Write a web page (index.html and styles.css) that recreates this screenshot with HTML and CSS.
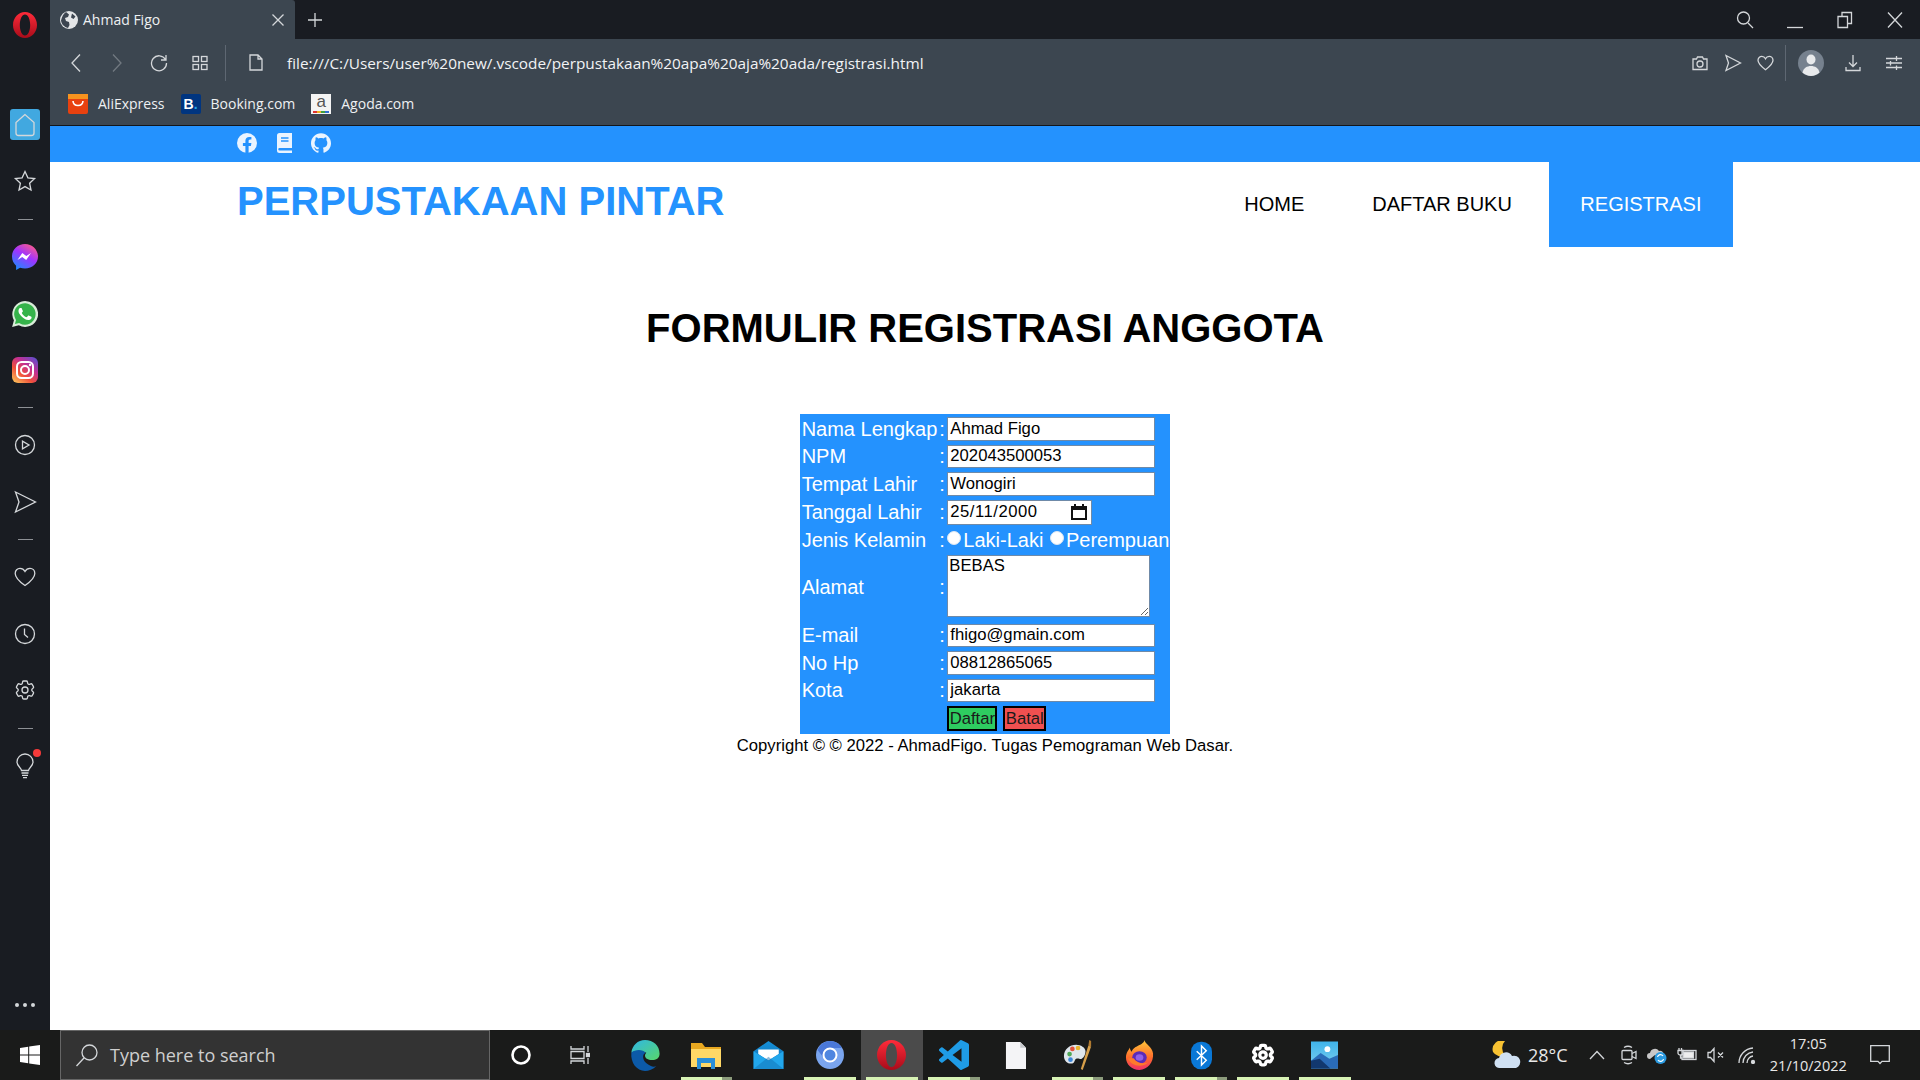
FILE: index.html
```html
<!DOCTYPE html>
<html lang="id">
<head>
    <meta charset="UTF-8">
    <title>Ahmad Figo</title>
    <link rel="stylesheet" href="styles.css">
</head>
<body>
<svg class="defs" width="0" height="0">
    <defs>
        <linearGradient id="g-opera" x1="0" y1="0" x2="0" y2="1"><stop offset="0" stop-color="#ff2b3a"/><stop offset="1" stop-color="#a80c1a"/></linearGradient>
        <linearGradient id="g-msg" x1="0.2" y1="1" x2="0.8" y2="0"><stop offset="0" stop-color="#1a8cff"/><stop offset="0.55" stop-color="#a033ff"/><stop offset="1" stop-color="#ff5c87"/></linearGradient>
        <linearGradient id="g-ig" x1="0.1" y1="1" x2="0.9" y2="0"><stop offset="0" stop-color="#fdc35a"/><stop offset="0.35" stop-color="#f0503c"/><stop offset="0.65" stop-color="#c22f93"/><stop offset="1" stop-color="#5b4fd0"/></linearGradient>
        <linearGradient id="g-edge" x1="0" y1="0" x2="1" y2="1"><stop offset="0" stop-color="#2fb7e6"/><stop offset="1" stop-color="#58d66a"/></linearGradient>
        <linearGradient id="g-mail" x1="0" y1="0" x2="0" y2="1"><stop offset="0" stop-color="#1590d8"/><stop offset="1" stop-color="#0f6cb0"/></linearGradient>
        <linearGradient id="g-fox" x1="0.5" y1="0" x2="0.5" y2="1"><stop offset="0" stop-color="#ffc93a"/><stop offset="0.6" stop-color="#ff6a2b"/><stop offset="1" stop-color="#f0306a"/></linearGradient>
        <linearGradient id="g-photo" x1="0" y1="0" x2="0" y2="1"><stop offset="0" stop-color="#3fb4ea"/><stop offset="1" stop-color="#7fd0f0"/></linearGradient>
        <symbol id="i-cog" viewBox="0 0 24 24"><path d="M9.594 3.94c.09-.542.56-.94 1.11-.94h2.593c.55 0 1.02.398 1.11.94l.213 1.281c.063.374.313.686.645.87.074.04.147.083.22.127.324.196.72.257 1.075.124l1.217-.456a1.125 1.125 0 011.37.49l1.296 2.247a1.125 1.125 0 01-.26 1.431l-1.003.827c-.293.24-.438.613-.431.992a6.759 6.759 0 010 .255c-.007.378.138.75.43.99l1.005.828c.424.35.534.954.26 1.43l-1.298 2.247a1.125 1.125 0 01-1.369.491l-1.217-.456c-.355-.133-.75-.072-1.076.124a6.57 6.57 0 01-.22.128c-.331.183-.581.495-.644.869l-.213 1.28c-.09.543-.56.941-1.11.941h-2.594c-.55 0-1.02-.398-1.11-.94l-.213-1.281c-.062-.374-.312-.686-.644-.87a6.52 6.52 0 01-.22-.127c-.325-.196-.72-.257-1.076-.124l-1.217.456a1.125 1.125 0 01-1.369-.49l-1.297-2.247a1.125 1.125 0 01.26-1.431l1.004-.827c.292-.24.437-.613.43-.992a6.932 6.932 0 010-.255c.007-.378-.138-.75-.43-.99l-1.004-.828a1.125 1.125 0 01-.26-1.43l1.297-2.247a1.125 1.125 0 011.37-.491l1.216.456c.356.133.751.072 1.076-.124.072-.044.146-.087.22-.128.332-.183.582-.495.644-.869l.214-1.281z"/><circle cx="12" cy="12" r="3"/></symbol>
    </defs>
</svg>

<div class="desktop">
    <div class="window">
        <aside class="side">
            <div class="side-logo">
                <svg width="24" height="26" viewBox="0 0 24 26"><path fill="url(#g-opera)" fill-rule="evenodd" d="M12 0C5.4 0 0 5.8 0 13s5.4 13 12 13 12-5.8 12-13S18.6 0 12 0zm0 2.500c3 0 5.200 4.700 5.200 10.500S15 23.500 12 23.500 6.800 18.800 6.800 13 9 2.500 12 2.500z"/></svg>
            </div>
            <div class="side-item">
                <span class="home-box">
                    <svg class="line" width="22" height="24" viewBox="0 0 22 24"><path d="M11 1.500L2 9.500v10.500a2.500 2.500 0 0 0 2.500 2.500h13a2.500 2.500 0 0 0 2.500-2.500V9.500z"/></svg>
                </span>
            </div>
            <div class="side-item">
                <svg class="line" width="24" height="24" viewBox="0 0 24 24"><path d="M12 2.500l2.900 6.300 6.700.8-5 4.600 1.400 6.800-6-3.400-6 3.400 1.400-6.800-5-4.600 6.700-.8z"/></svg>
            </div>
            <div class="side-dash"></div>
            <div class="side-item">
                <svg width="26" height="26" viewBox="0 0 26 26"><path fill="url(#g-msg)" d="M13 0C5.700 0 0 5.300 0 12.500c0 3.800 1.600 7 4.100 9.200V26l4-2.200c1.500.5 3.100.7 4.900.7 7.300 0 13-5.300 13-12S20.300 0 13 0z"/><path fill="#fff" d="M5.500 16l4.800-7 4 3 4.700-3-4.800 7-4-3z"/></svg>
            </div>
            <div class="side-item side-wa">
                <svg width="26" height="26" viewBox="0 0 24 24"><path fill="#d9ecd9" d="M.1 24l1.700-6.200A11.900 11.900 0 1 1 12 23.900a11.900 11.900 0 0 1-5.700-1.500z"/><path fill="#35b34a" d="M2.700 21.300l1-3.800-.3-.4A9.900 9.900 0 1 1 12 21.900a9.900 9.900 0 0 1-5-1.400l-.4-.2z"/><path fill="#fff" d="M17.470 14.380c-.3-.15-1.760-.87-2.030-.97-.27-.1-.47-.15-.67.15-.2.3-.77.97-.94 1.170-.17.2-.35.22-.65.07-.3-.15-1.260-.46-2.400-1.480-.89-.79-1.490-1.770-1.660-2.070-.17-.3-.02-.46.13-.61.13-.13.3-.35.45-.52.15-.17.2-.3.3-.5.1-.2.05-.37-.02-.52-.07-.15-.67-1.610-.92-2.210-.24-.58-.49-.5-.67-.51h-.57c-.2 0-.52.07-.79.37-.27.3-1.040 1.020-1.040 2.480s1.070 2.880 1.220 3.070c.15.2 2.100 3.200 5.080 4.490.71.3 1.260.49 1.690.63.71.23 1.360.2 1.870.12.57-.09 1.760-.72 2.010-1.410.25-.7.25-1.290.17-1.410-.07-.13-.27-.2-.57-.35z"/></svg>
            </div>
            <div class="side-item">
                <svg width="26" height="26" viewBox="0 0 26 26"><rect width="26" height="26" rx="6" fill="url(#g-ig)"/><rect x="5" y="5" width="16" height="16" rx="4.500" fill="none" stroke="#fff" stroke-width="2"/><circle cx="13" cy="13" r="4" fill="none" stroke="#fff" stroke-width="2"/><circle cx="18" cy="8" r="1.200" fill="#fff"/></svg>
            </div>
            <div class="side-dash"></div>
            <div class="side-item">
                <svg class="line" width="22" height="22" viewBox="0 0 22 22"><circle cx="11" cy="11" r="9.500"/><path d="M8.500 7.200v7.600l6.500-3.800z"/></svg>
            </div>
            <div class="side-item">
                <svg class="line" width="24" height="24" viewBox="0 0 24 24"><path d="M2.500 2l20 10-20 10 3.500-10z"/></svg>
            </div>
            <div class="side-dash"></div>
            <div class="side-item">
                <svg class="line" width="22" height="20" viewBox="0 0 22 20"><path d="M11 18.500C4 13.500 1.200 10 1.200 6.400 1.200 3.400 3.400 1.300 6 1.300c2 0 3.900 1.100 5 3.100 1.100-2 3-3.100 5-3.100 2.600 0 4.800 2.100 4.800 5.100 0 3.600-2.800 7.100-9.800 12.100z"/></svg>
            </div>
            <div class="side-item">
                <svg class="line" width="22" height="22" viewBox="0 0 22 22"><circle cx="11" cy="11" r="9.500"/><path d="M10.500 5.500v6l3.500 3"/></svg>
            </div>
            <div class="side-item">
                <svg class="line" width="24" height="24" viewBox="0 0 24 24"><use href="#i-cog"/></svg>
            </div>
            <div class="side-dash"></div>
            <div class="side-item">
                <span class="bulb">
                    <svg class="line" width="20" height="26" viewBox="0 0 20 26"><path d="M6.500 17.500c0-2.500-4.500-4-4.500-8.500a8 8 0 0 1 16 0c0 4.500-4.500 6-4.500 8.500z"/><path d="M6.500 20h7M7 22.300h6M8 24.600h4"/></svg>
                    <i class="bulb-dot"></i>
                </span>
            </div>
            <div class="side-more"><i></i><i></i><i></i></div>
        </aside>

        <div class="browser">
            <div class="tabstrip">
                <div class="tab">
                    <svg width="18" height="18" viewBox="0 0 18 18"><circle cx="9" cy="9" r="9" fill="#e4e6e8"/><path fill="#3c4550" d="M6 1l3 2.500-1 2.500-3 1 1 3 3 1 .5 3-1.500 3C4 16 1.500 13 1 9.500 2 5.500 3.500 2.500 6 1zm6 1.500l3.500 3-2 2.500-2.500-1.500z"/></svg>
                    <span class="tab-title">Ahmad Figo</span>
                    <svg class="line tab-close" width="14" height="14" viewBox="0 0 14 14"><path d="M1.500 1.500l11 11M12.500 1.500l-11 11"/></svg>
                </div>
                <svg class="line newtab" width="16" height="16" viewBox="0 0 16 16"><path d="M8 1v14M1 8h14"/></svg>
                <div class="winctl">
                    <span class="winbtn"><svg class="line" width="20" height="20" viewBox="0 0 20 20"><circle cx="8.500" cy="8" r="6"/><path d="M13 13l5 5"/></svg></span>
                    <span class="winbtn"><svg class="line" width="18" height="18" viewBox="0 0 18 18"><path d="M1 16.500h16"/></svg></span>
                    <span class="winbtn"><svg class="line" width="18" height="18" viewBox="0 0 18 18"><path d="M2 5.500h9.500v11H2zM6 5.500V1.500h9.500v11h-4"/></svg></span>
                    <span class="winbtn"><svg class="line" width="18" height="18" viewBox="0 0 18 18"><path d="M2 1.500l14 15M16 1.500l-14 15"/></svg></span>
                </div>
            </div>

            <div class="toolbar">
                <span class="tb-btn"><svg class="line" width="12" height="20" viewBox="0 0 12 20"><path d="M10 1.500L2 10l8 8.500"/></svg></span>
                <span class="tb-btn tb-off"><svg class="line" width="12" height="20" viewBox="0 0 12 20"><path d="M2 1.500L10 10l-8 8.500"/></svg></span>
                <span class="tb-btn"><svg class="line" width="18" height="18" viewBox="0 0 18 18"><path d="M15.500 5.500A7.500 7.500 0 1 0 16.500 9M16 1v5h-5"/></svg></span>
                <span class="tb-btn"><svg class="line" width="16" height="16" viewBox="0 0 16 16"><rect x="1" y="1.500" width="5.500" height="5"/><rect x="9.500" y="1.500" width="5.500" height="5"/><rect x="1" y="9.500" width="5.500" height="5"/><rect x="9.500" y="9.500" width="5.500" height="5"/></svg></span>
                <span class="tb-sep"></span>
                <span class="tb-doc"><svg class="line" width="14" height="17" viewBox="0 0 14 17"><path d="M1 1h8l4 4v11H1zM9 1v4h4"/></svg></span>
                <span class="url">file:///C:/Users/user%20new/.vscode/perpustakaan%20apa%20aja%20ada/registrasi.html</span>
                <div class="tb-right">
                    <span class="tb-mini"><svg class="line" width="16" height="16" viewBox="0 0 16 16"><path d="M1 4h3.500l1-2h5l1 2H15v10.500H1z"/><circle cx="8" cy="9" r="3"/></svg></span>
                    <span class="tb-mini"><svg class="line" width="18" height="18" viewBox="0 0 18 18"><path d="M2 1.500L16.500 9 2 16.500l2.500-7.500z"/></svg></span>
                    <span class="tb-mini"><svg class="line" width="17" height="16" viewBox="0 0 17 16"><path d="M8.500 14.800C3.500 11 1 8.300 1 5.300 1 3 2.800 1.300 4.800 1.300c1.500 0 2.900.8 3.700 2.400.8-1.600 2.200-2.400 3.700-2.400 2 0 3.800 1.700 3.800 4 0 3-2.500 5.700-7.500 9.500z"/></svg></span>
                    <span class="tb-sep tb-sep-r"></span>
                    <span class="tb-btn">
                        <svg width="26" height="26" viewBox="0 0 26 26"><circle cx="13" cy="13" r="13" fill="#76818e"/><ellipse cx="13" cy="9.500" rx="4.500" ry="5" fill="#e8eaec"/><path fill="#e8eaec" d="M4.500 22.500C5.500 18 9 16 13 16s7.500 2 8.500 6.500A13 13 0 0 1 13 26a13 13 0 0 1-8.500-3.500z"/></svg>
                    </span>
                    <span class="tb-btn"><svg class="line" width="16" height="18" viewBox="0 0 16 18"><path d="M8 1v11M4 8.500L8 12.500l4-4M1 13v3.500h14V13"/></svg></span>
                    <span class="tb-btn"><svg class="line" width="18" height="16" viewBox="0 0 18 16"><path d="M1 3.500h16M1 8h16M1 12.500h16M11.500 1v5M5.500 6v4.500M11.500 10.500V15"/></svg></span>
                </div>
            </div>

            <div class="bookmarks">
                <span class="bm">
                    <svg width="20" height="20" viewBox="0 0 20 20"><rect width="20" height="20" rx="2" fill="#e8410f"/><rect width="20" height="5" fill="#f7931e"/><path d="M5 7c.5 6 9.500 6 10 0" fill="none" stroke="#fff" stroke-width="1.600"/></svg>
                    <span>AliExpress</span>
                </span>
                <span class="bm">
                    <span class="bm-ico bm-booking">B<i>.</i></span>
                    <span>Booking.com</span>
                </span>
                <span class="bm">
                    <span class="bm-ico bm-agoda">a</span>
                    <span>Agoda.com</span>
                </span>
            </div>

            <main class="page">
                <div class="top-strip">
                    <div class="container top-icons">
                        <svg width="20" height="20" viewBox="0 0 20 20"><circle cx="10" cy="10" r="10" fill="#eaf4ff"/><path fill="#2492fe" d="M8.400 20v-7H5.900v-3h2.500V7.800c0-2.500 1.500-3.900 3.800-3.900 1.100 0 2.200.2 2.200.2v2.500h-1.200c-1.200 0-1.600.8-1.600 1.500V10h2.800l-.5 3h-2.300v7z"/></svg>
                        <svg width="20" height="20" viewBox="0 0 20 20"><path fill="#eaf4ff" d="M3 2.500A2.500 2.500 0 0 1 5.500 0H18v15H5.500a1.200 1.200 0 0 0 0 2.500H18V20H5.500A2.500 2.500 0 0 1 3 17.500z"/><path stroke="#2492fe" stroke-width="1.400" d="M7 5h7.500M7 8h7.500"/></svg>
                        <svg width="20" height="20" viewBox="0 0 24 24"><path fill="#eaf4ff" d="M12 .297c-6.630 0-12 5.373-12 12 0 5.303 3.438 9.800 8.205 11.385.6.113.82-.258.82-.577 0-.285-.01-1.040-.015-2.040-3.338.724-4.042-1.610-4.042-1.610C4.422 18.070 3.633 17.700 3.633 17.700c-1.087-.744.084-.729.084-.729 1.205.084 1.838 1.236 1.838 1.236 1.070 1.835 2.809 1.305 3.495.998.108-.776.417-1.305.76-1.605-2.665-.3-5.466-1.332-5.466-5.930 0-1.310.465-2.380 1.235-3.220-.135-.303-.54-1.523.105-3.176 0 0 1.005-.322 3.300 1.230.96-.267 1.980-.399 3-.405 1.020.006 2.040.138 3 .405 2.280-1.552 3.285-1.230 3.285-1.230.645 1.653.24 2.873.12 3.176.765.84 1.230 1.910 1.230 3.220 0 4.610-2.805 5.625-5.475 5.920.42.36.81 1.096.81 2.220 0 1.606-.015 2.896-.015 3.286 0 .315.21.69.825.57C20.565 22.092 24 17.592 24 12.297c0-6.627-5.373-12-12-12"/></svg>
                    </div>
                </div>
                <header class="container site-head">
                    <div class="site-title">PERPUSTAKAAN PINTAR</div>
                    <nav class="site-nav">
                        <a class="nav-link">HOME</a>
                        <a class="nav-link">DAFTAR BUKU</a>
                        <a class="nav-link nav-active">REGISTRASI</a>
                    </nav>
                </header>
                <h1 class="form-title">FORMULIR REGISTRASI ANGGOTA</h1>
                <form class="reg-form">
                    <table class="reg-table">
                        <tr><td>Nama Lengkap</td><td>:</td><td><input class="field" type="text" value="Ahmad Figo"></td></tr>
                        <tr><td>NPM</td><td>:</td><td><input class="field" type="text" value="202043500053"></td></tr>
                        <tr><td>Tempat Lahir</td><td>:</td><td><input class="field" type="text" value="Wonogiri"></td></tr>
                        <tr>
                            <td>Tanggal Lahir</td><td>:</td>
                            <td>
                                <span class="date-field">
                                    <input class="date-text" type="text" value="25/11/2000">
                                    <svg width="16" height="16" viewBox="0 0 16 16"><path fill="#111" d="M3 0h2v2h6V0h2v2h3v14H0V2h3zM2 6v8h12V6z"/></svg>
                                </span>
                            </td>
                        </tr>
                        <tr>
                            <td>Jenis Kelamin</td><td>:</td>
                            <td><input class="radio" type="radio" name="jk">Laki-Laki <input class="radio" type="radio" name="jk">Perempuan</td>
                        </tr>
                        <tr><td>Alamat</td><td>:</td><td><textarea class="area">BEBAS</textarea></td></tr>
                        <tr><td>E-mail</td><td>:</td><td><input class="field" type="text" value="fhigo@gmain.com"></td></tr>
                        <tr><td>No Hp</td><td>:</td><td><input class="field" type="text" value="08812865065"></td></tr>
                        <tr><td>Kota</td><td>:</td><td><input class="field" type="text" value="jakarta"></td></tr>
                        <tr>
                            <td></td><td></td>
                            <td class="btn-cell"><button class="btn btn-ok" type="button">Daftar</button><button class="btn btn-no" type="button">Batal</button></td>
                        </tr>
                    </table>
                </form>
                <p class="copy">Copyright © © 2022 - AhmadFigo. Tugas Pemograman Web Dasar.</p>
            </main>
        </div>
    </div>

    <footer class="taskbar">
        <span class="start"><svg width="20" height="20" viewBox="0 0 20 20"><path fill="#fff" d="M0 2.900l8.200-1.100v7.700H0zM9.200 1.600L20 0v9.500H9.200zM0 10.500h8.200v7.700L0 17.100zM9.200 10.500H20V20L9.200 18.400z"/></svg></span>
        <div class="search">
            <svg class="line" width="24" height="24" viewBox="0 0 24 24"><circle cx="14.500" cy="9.500" r="7.500"/><path d="M9 15l-7.500 8"/></svg>
            <span>Type here to search</span>
        </div>
        <div class="tasks">
            <span class="task"><svg width="22" height="22" viewBox="0 0 22 22"><circle cx="11" cy="11" r="8.500" fill="none" stroke="#fff" stroke-width="2.600"/></svg></span>
            <span class="task task-view"><svg class="line" width="20" height="20" viewBox="0 0 20 20"><path d="M1 1v3h13V1M1 6.500h13v7H1zM1 19v-3h13v3M18 1v6M18 13v6"/><rect x="16.500" y="8.500" width="3" height="3" fill="#ddd"/></svg></span>
            <span class="task"><svg width="30" height="31" viewBox="0 0 32 34"><path fill="url(#g-edge)" d="M1 14C2 6 8 0 16 0c9 0 16 6 16 15 0 5-4 7-8 7-5 0-8-2-8-5 0-1 .5-2 1.500-3-5-2-13-3-16.500 0z"/><path fill="#0c5aa8" d="M1 14c4-4 13-4 15.500 0-4 2-3.500 9 3 13 3 2 6 3 9 1.500C25 32 20 34 16 34 7 34 0 25 1 14z"/></svg></span>
            <span class="task task-run task-tail"><svg width="30" height="28" viewBox="0 0 30 28"><path fill="#e8a820" d="M0 2h11l3 4h16v6H0z"/><path fill="#ffd866" d="M0 8h30v18H0z"/><path fill="#2a8fd8" d="M6 17h18v11H20v-6h-10v6H6z"/></svg></span>
            <span class="task"><svg width="31" height="28" viewBox="0 0 32 30"><path fill="url(#g-mail)" d="M16 0l16 11v19H0V11z"/><path fill="#fff" d="M5 9h22v5l-11 7L5 14z"/><path fill="#22a7ec" d="M0 11l16 10 16-10v19H0z"/><path fill="#0f6cb0" d="M0 30l16-13 16 13z" opacity=".45"/></svg></span>
            <span class="task task-run"><svg width="28" height="28" viewBox="0 0 28 28"><circle cx="14" cy="14" r="14" fill="#7aa5ee"/><path fill="#4a78d8" d="M14 0a14 14 0 0 1 12 7H14a7 7 0 0 0-6.500 9.500L1.500 9A14 14 0 0 1 14 0z"/><circle cx="14" cy="14" r="6.500" fill="#4f86e0" stroke="#fff" stroke-width="2"/></svg></span>
            <span class="task task-run task-now"><svg width="29" height="30" viewBox="0 0 24 26" preserveAspectRatio="none"><path fill="url(#g-opera)" fill-rule="evenodd" d="M12 0C5.400 0 0 5.800 0 13s5.400 13 12 13 12-5.800 12-13S18.600 0 12 0zm0 2.500c2.800 0 4.600 4.700 4.600 10.500S14.800 23.500 12 23.500 7.400 18.800 7.400 13 9.200 2.500 12 2.500z"/></svg></span>
            <span class="task task-run task-tail"><svg width="30" height="30" viewBox="0 0 24 24"><path fill="#1f9ce6" d="M23.150 2.587L18.210.21a1.494 1.494 0 0 0-1.705.29l-9.460 8.630-4.120-3.128a.999.999 0 0 0-1.276.057L.327 7.261A1 1 0 0 0 .326 8.740L3.899 12 .326 15.260a1 1 0 0 0 .001 1.479L1.650 17.940a.999.999 0 0 0 1.276.057l4.120-3.128 9.460 8.630a1.492 1.492 0 0 0 1.704.29l4.942-2.377A1.500 1.500 0 0 0 24 20.060V3.939a1.500 1.500 0 0 0-.85-1.352zm-5.146 14.861L10.826 12l7.178-5.448v10.896z"/></svg></span>
            <span class="task"><svg width="21" height="27" viewBox="0 0 22 28" preserveAspectRatio="none"><path fill="#f4f4f6" d="M1 0h15l6 6v22H1z"/><path fill="#c6c8cc" d="M16 0l6 6h-6z"/></svg></span>
            <span class="task task-run task-tail"><svg width="30" height="30" viewBox="0 0 30 32"><path fill="#dfe6ec" d="M13 5C6 5 0 10 0 17c0 6 5 9 9 8 3-1 2-4 4-5 3-1 4 1 6 0 3-2 4-5 4-8 0-4-5-7-10-7z"/><circle cx="6" cy="15" r="2.500" fill="#4fa858"/><circle cx="9" cy="9.500" r="2.500" fill="#e2533d"/><circle cx="15" cy="8.500" r="2.500" fill="#e8b62e"/><circle cx="7" cy="21" r="2.500" fill="#3d86d8"/><path fill="#d8a04a" d="M20 32l-2-1L26 6l3 1z"/><path fill="#b07a30" d="M26 6l1-6 2 1v6z"/></svg></span>
            <span class="task task-run"><svg width="29" height="30" viewBox="0 0 30 36" preserveAspectRatio="none"><path fill="url(#g-fox)" d="M20 0c1 5 8 8 9 16 1 11-6 20-14 20S1 29 1 21c0-6 3-9 4-12 0 2 1 4 2 5 1-5 7-7 8-8 2-1 5-3 5-6z"/><circle cx="15" cy="21" r="7.500" fill="#5b2bb8"/><circle cx="15" cy="21" r="4" fill="#9060e8"/><path fill="#ff7a2b" d="M3 22c3 9 14 12 21 5-5 2-12 1-15-5z"/></svg></span>
            <span class="task task-run task-tail"><svg width="21" height="29" viewBox="0 0 22 29"><rect width="22" height="29" rx="10.500" fill="#0a78d6"/><path d="M6 10l10 9.500-5 5V4.500l5 5L6 19" fill="none" stroke="#fff" stroke-width="1.500"/></svg></span>
            <span class="task task-run"><svg class="gear" width="26" height="26" viewBox="0 0 24 24"><use href="#i-cog"/></svg></span>
            <span class="task task-run"><svg width="27" height="28" viewBox="0 0 28 28"><rect width="28" height="28" fill="url(#g-photo)"/><circle cx="17" cy="8" r="3" fill="#fff"/><path fill="#2a6cb8" d="M0 20l10-8 9 6 9-4v14H0z"/><path fill="#12386e" d="M0 28v-8l9-2 11 10z"/></svg></span>
        </div>
        <div class="tray">
            <svg class="tray-wx" width="30" height="28" viewBox="0 0 30 28"><path fill="#f8c232" d="M13 0a9 9 0 0 0-12 11 9 9 0 0 0 12 3 10 10 0 0 1 0-14z"/><path fill="#cfe0f2" d="M8 27a5 5 0 0 1-1-10 7 7 0 0 1 13-2 6 6 0 0 1 4 12z"/></svg>
            <span class="tray-temp">28°C</span>
            <svg class="line tray-up" width="16" height="10" viewBox="0 0 16 10"><path d="M1 9l7-7.500L15 9"/></svg>
            <svg class="line tray-meet" width="16" height="20" viewBox="0 0 16 20"><path d="M3 2.500Q7 0 11 2.500M3 17.500Q7 20 11 17.500"/><rect x="1" y="5.500" width="10" height="9" rx="1"/><path d="M11 8.500l4-2v7l-4-2"/></svg>
            <svg class="tray-one" width="20" height="18" viewBox="0 0 20 18"><path fill="#c8c8c8" d="M3 13a3 3 0 0 1 0-6 5 5 0 0 1 9-2 4 4 0 0 1 5 4H8z"/><circle cx="13.500" cy="12" r="6" fill="#2a9ae0"/><path d="M10.500 11a3 3 0 0 1 5.500-1M16.500 13a3 3 0 0 1-5.500 1" fill="none" stroke="#fff" stroke-width="1.200"/></svg>
            <svg class="line tray-bat" width="20" height="14" viewBox="0 0 20 14"><rect x="5" y="2.500" width="14" height="9"/><rect x="6.500" y="4" width="10" height="6" fill="#eee"/><path d="M2 0v2M4.500 0v2M1 2.500h5V5a2 2 0 0 1-2 2H3a2 2 0 0 1-2-2zM3.500 7v3h2"/></svg>
            <svg class="line tray-vol" width="18" height="16" viewBox="0 0 18 16"><path d="M1 5.500h2.500L7 1.500v13l-3.500-4H1zM11 5.500l5 5M16 5.500l-5 5"/></svg>
            <svg class="line tray-wifi" width="18" height="18" viewBox="0 0 18 18"><path d="M1 17A15 15 0 0 1 15 2M5 17A11 11 0 0 1 15 6M9 17a7 7 0 0 1 6-7"/><circle cx="15" cy="16" r="1.500" fill="#ddd"/></svg>
            <span class="clock"><span>17:05</span><span>21/10/2022</span></span>
            <svg class="line tray-note" width="20" height="20" viewBox="0 0 20 20"><path d="M.7.700h18.600v15.600h-7.300L10 18.500l-2-2.200H.7z"/></svg>
        </div>
    </footer>
</div>
</body>
</html>
```

FILE: styles.css
```css
* {
    box-sizing: border-box;
}

html,
body {
    margin: 0;
    height: 100%;
    overflow: hidden;
}

body {
    font-family: "Liberation Sans", Arial, sans-serif;
    background-color: #fff;
}

.defs {
    display: block;
    height: 0;
}

.desktop {
    display: flex;
    flex-direction: column;
    height: 1080px;
}

.window {
    display: flex;
    height: 1030px;
}

.line {
    fill: none;
    stroke: #d4d7da;
    stroke-width: 1.3;
}

/* sidebar */
.side {
    display: flex;
    flex-direction: column;
    align-items: center;
    flex: 0 0 50px;
    background-color: #191c22;
}

.side-logo {
    display: flex;
    justify-content: center;
    height: 96.5px;
    padding-top: 12px;
}

.side-item {
    display: flex;
    align-items: center;
    justify-content: center;
    width: 100%;
    height: 56.5px;
}

.side-wa {
    padding-top: 2px;
}

.side-dash {
    width: 15px;
    height: 19px;
    background: linear-gradient(#8d9095, #8d9095) center / 15px 1px no-repeat;
}

.home-box {
    display: flex;
    align-items: center;
    justify-content: center;
    width: 30px;
    height: 31px;
    background-color: #41a8e0;
    border-radius: 3px;
}

.bulb {
    position: relative;
    display: flex;
}

.bulb-dot {
    position: absolute;
    top: -4px;
    right: -6px;
    width: 8px;
    height: 8px;
    background-color: #f53a3a;
    border-radius: 50%;
}

.side-more {
    display: flex;
    gap: 4px;
    margin-top: auto;
    padding-bottom: 23px;
}

.side-more i {
    width: 4px;
    height: 4px;
    background-color: #d4d7da;
    border-radius: 50%;
}

/* browser chrome */
.browser {
    display: flex;
    flex-direction: column;
    flex: 1;
    min-width: 0;
}

.tabstrip {
    display: flex;
    align-items: center;
    flex: 0 0 39px;
    background-color: #191c22;
}

.tab {
    display: flex;
    align-items: center;
    width: 245px;
    height: 39px;
    padding-left: 10px;
    background-color: #3c4650;
    border-top-right-radius: 3px;
    color: #eef0f2;
    font-family: "Open Sans", sans-serif;
    font-size: 14px;
}

.tab-title {
    margin-left: 5px;
}

.tab-close {
    margin-left: auto;
    margin-right: 10px;
}

.newtab {
    margin-left: 12px;
}

.winctl {
    display: flex;
    align-items: center;
    margin-left: auto;
}

.winbtn {
    display: flex;
    justify-content: center;
    width: 50px;
}

.toolbar {
    display: flex;
    align-items: center;
    flex: 0 0 47px;
    padding: 0 5px;
    background-color: #3c4650;
}

.tb-btn {
    display: flex;
    align-items: center;
    justify-content: center;
    width: 41.5px;
}

.tb-off {
    opacity: 0.35;
}

.tb-sep {
    width: 1px;
    height: 36px;
    margin-left: 4px;
    background-color: #5e6772;
}

.tb-doc {
    display: flex;
    margin-left: 23px;
}

.url {
    margin-left: 24px;
    color: #f2f3f5;
    font-family: "Open Sans", sans-serif;
    font-size: 15.35px;
    white-space: nowrap;
}

.tb-right {
    display: flex;
    align-items: center;
    margin-left: auto;
}

.tb-mini {
    display: flex;
    align-items: center;
    justify-content: center;
    width: 32.5px;
}

.tb-sep-r {
    margin-left: 3px;
    margin-right: 5px;
}

.bookmarks {
    display: flex;
    align-items: center;
    gap: 16px;
    flex: 0 0 40px;
    padding-left: 18px;
    padding-bottom: 4px;
    background-color: #3c4650;
    border-bottom: 1px solid #14161a;
}

.bm {
    display: flex;
    align-items: center;
    gap: 10px;
    color: #eef0f2;
    font-family: "Open Sans", sans-serif;
    font-size: 14px;
}

.bm-ico {
    position: relative;
    display: flex;
    justify-content: center;
    width: 20px;
    height: 20px;
    font-family: "Liberation Sans", sans-serif;
    line-height: 20px;
}

.bm-booking {
    background-color: #003580;
    border-radius: 2px;
    color: #fff;
    font-size: 14px;
    font-weight: bold;
}

.bm-booking i {
    color: #24a6e8;
    font-style: normal;
}

.bm-agoda {
    background-color: #f4f4f4;
    color: #555;
    font-size: 17px;
    line-height: 15px;
}

.bm-agoda::after {
    content: "";
    position: absolute;
    left: 2px;
    right: 2px;
    bottom: 1px;
    height: 2px;
    background: linear-gradient(90deg, #e0342f 25%, #f0b020 25% 50%, #40a040 50% 75%, #3070d0 75%);
}

/* page */
.page {
    flex: 1;
    min-height: 0;
    background-color: #fff;
}

.container {
    width: 80%;
    margin: 0 auto;
}

.top-strip {
    height: 36px;
    background-color: #2492fe;
}

.top-icons {
    display: flex;
    align-items: center;
    gap: 17px;
    height: 100%;
    padding-bottom: 2px;
}

.site-head {
    display: flex;
    justify-content: space-between;
    height: 85px;
}

.site-title {
    margin-top: 17px;
    color: #2492fe;
    font-size: 40px;
    font-weight: bold;
}

.site-nav {
    display: flex;
    gap: 6px;
}

.nav-link {
    display: flex;
    align-items: center;
    padding: 0 31px;
    color: #000;
    font-size: 20px;
}

.nav-active {
    padding: 0 31.5px;
    background-color: #2492fe;
    color: #fff;
}

.form-title {
    margin: 59px 0 63px;
    color: #000;
    font-size: 40px;
    font-weight: bold;
    text-align: center;
}

.reg-form {
    display: flex;
    justify-content: center;
}

.reg-table {
    border-spacing: 0 2px;
    background-color: #2492fe;
    color: #fff;
    font-size: 20px;
}

.reg-table td {
    padding: 1px 0;
    line-height: 22px;
}

.reg-table td:first-child {
    padding: 1px 2px;
}

.reg-table td:last-child {
    padding: 1px 1px 1px 1.5px;
}

.field,
.date-text,
.area {
    font-family: "Liberation Sans", Arial, sans-serif;
    font-size: 16.67px;
    color: #000;
}

.field {
    display: block;
    width: 208px;
    height: 23.5px;
    margin-left: 1px;
    padding: 1px 2px;
    border: 1px solid #6f8aa8;
}

.date-field {
    display: flex;
    align-items: center;
    width: 145px;
    height: 25px;
    margin-left: 1px;
    padding-right: 2px;
    background-color: #fff;
    border: 1px solid #6f8aa8;
}

.date-text {
    width: 122.5px;
    height: 21px;
    padding: 0 2px;
    border: 0;
    letter-spacing: 0.5px;
}

.radio {
    appearance: none;
    width: 14px;
    height: 14px;
    margin: 0 2px 0 1px;
    background-color: #fff;
    border: 1px solid #dbe6f2;
    border-radius: 50%;
    vertical-align: 2px;
}

.area {
    display: block;
    width: 203px;
    height: 62px;
    margin-bottom: 3px;
    margin-left: 1px;
    padding: 0 1px;
    border: 1px solid #6f8aa8;
}

.btn-cell {
    font-size: 0;
}

.btn {
    height: 25px;
    padding: 0;
    border: 2.5px solid #000;
    color: #1a1a1a;
    font-family: "Liberation Sans", Arial, sans-serif;
    font-size: 16.67px;
    vertical-align: top;
}

.btn-ok {
    width: 50px;
    margin-left: 1px;
    background-color: #2ecc60;
}

.btn-no {
    width: 43px;
    margin-left: 6px;
    background-color: #f05050;
}

.copy {
    margin: 2px 0 0;
    color: #000;
    font-size: 16.67px;
    text-align: center;
}

/* taskbar */
.taskbar {
    display: flex;
    align-items: center;
    flex: 0 0 50px;
    padding-right: 4px;
    background-color: #1a1b1a;
}

.start {
    display: flex;
    justify-content: center;
    width: 60px;
}

.search {
    display: flex;
    align-items: center;
    gap: 11px;
    width: 430px;
    height: 50px;
    padding-left: 14px;
    background-color: #333;
    border: 1px solid #666;
    color: #cfcfcf;
    font-family: "Open Sans", sans-serif;
    font-size: 18px;
}

.tasks {
    display: flex;
    height: 100%;
}

.task {
    position: relative;
    display: flex;
    align-items: center;
    justify-content: center;
    width: 61.85px;
}

.task-view svg {
    margin-right: 6px;
}

.task-now {
    background-color: #4b4b4b;
}

.task-run::after {
    content: "";
    position: absolute;
    left: 5px;
    right: 5px;
    bottom: 0;
    height: 3px;
    background-color: #d7f2b4;
}

.task-tail::after {
    background: linear-gradient(90deg, #d7f2b4 80%, #8c9c7c 80%);
}

.tray {
    display: flex;
    align-items: center;
    flex: 1;
    height: 100%;
    color: #e8e8e8;
    font-family: "Open Sans", sans-serif;
}

.tray-wx {
    margin-left: 136.3px;
}

.tray-temp {
    margin-left: 5.8px;
    font-size: 18px;
}

.tray-up {
    margin-left: 21.2px;
}

.tray-meet {
    margin-left: 15.9px;
}

.tray-one {
    margin-left: 10.2px;
}

.tray-bat {
    margin-left: 10px;
}

.tray-vol {
    margin-left: 10px;
}

.tray-wifi {
    margin-left: 13px;
}

.clock {
    display: flex;
    flex-direction: column;
    align-items: center;
    gap: 3px;
    margin-left: 14px;
    padding-bottom: 2px;
    font-size: 14.5px;
    line-height: 19px;
}

.tray-note {
    margin-left: 22.8px;
}

.gear {
    fill: none;
    stroke: #fff;
    stroke-width: 3;
}
```
